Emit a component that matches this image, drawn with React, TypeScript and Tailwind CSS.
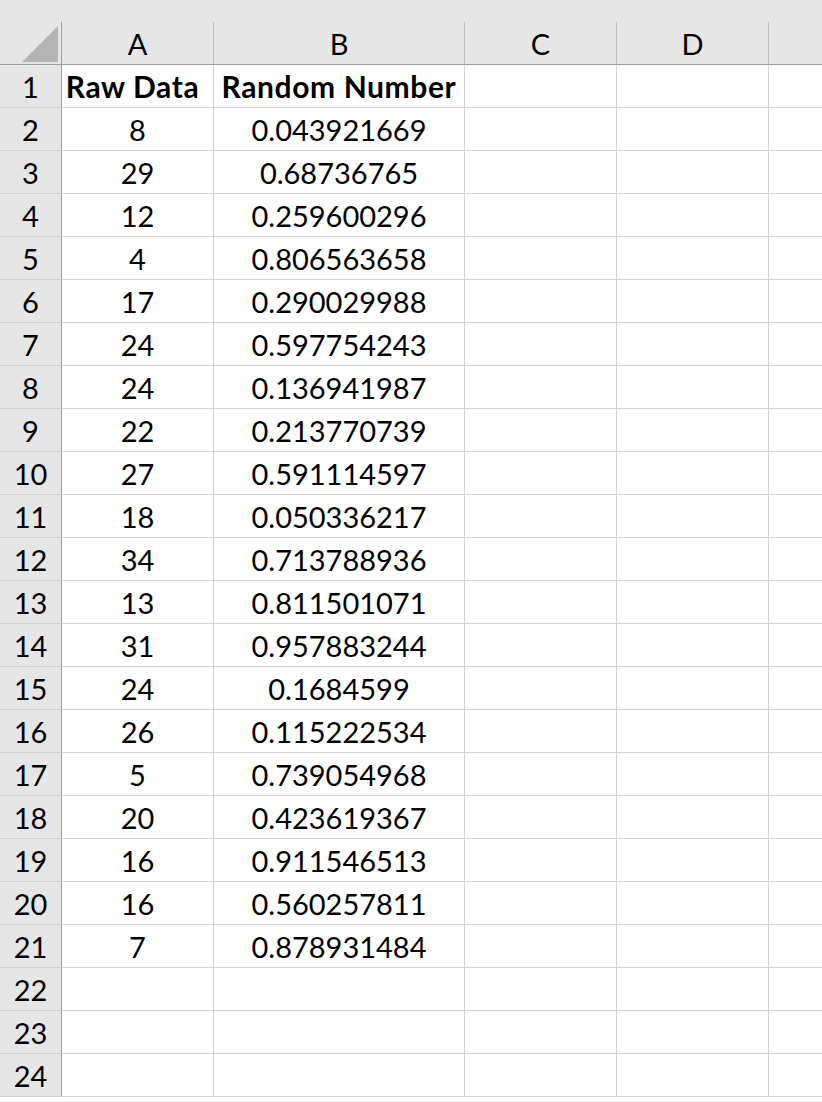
import React from 'react';

const rows: [string, string][] = [
    ['Raw Data', 'Random Number'],
    ['8', '0.043921669'],
    ['29', '0.68736765'],
    ['12', '0.259600296'],
    ['4', '0.806563658'],
    ['17', '0.290029988'],
    ['24', '0.597754243'],
    ['24', '0.136941987'],
    ['22', '0.213770739'],
    ['27', '0.591114597'],
    ['18', '0.050336217'],
    ['34', '0.713788936'],
    ['13', '0.811501071'],
    ['31', '0.957883244'],
    ['24', '0.1684599'],
    ['26', '0.115222534'],
    ['5', '0.739054968'],
    ['20', '0.423619367'],
    ['16', '0.911546513'],
    ['16', '0.560257811'],
    ['7', '0.878931484'],
    ['', ''],
    ['', ''],
    ['', ''],
];

const colWidths = ['w-[152px]', 'w-[251px]', 'w-[152px]', 'w-[152px]'];
const letters = ['A', 'B', 'C', 'D'];

const App: React.FC = () => {
    return (
        <div className="w-[822px] h-[1102px] overflow-hidden bg-white text-black font-['Lato',sans-serif] text-[29px] leading-none">
            {/* column headers */}
            <div className="flex h-[65px] bg-[#e6e6e6] border-b border-[#9e9e9e]">
                <div className="w-[62px] shrink-0 flex flex-col">
                    <div className="h-[22px]" />
                    <div className="flex-1 border-r border-[#9e9e9e] flex items-end justify-end pr-[3px] pb-[2px]">
                        <svg width="36" height="36" viewBox="0 0 36 36">
                            <polygon points="36,0 36,36 0,36" fill="#b4b4b4" />
                        </svg>
                    </div>
                </div>
                {letters.map((l, i) => (
                    <div key={l} className={`${colWidths[i]} shrink-0 flex flex-col`}>
                        <div className="h-[22px]" />
                        <div className="flex-1 border-r border-[#c0c0c0] flex items-center justify-center">
                            {l}
                        </div>
                    </div>
                ))}
                <div className="flex-1" />
            </div>

            {rows.map(([a, b], i) => (
                <div key={i} className="flex h-[43px]">
                    <div className="w-[62px] shrink-0 bg-[#e6e6e6] border-r border-[#9e9e9e] border-b border-b-[#d0d0d0] flex items-center justify-center">
                        {i + 1}
                    </div>
                    <div className={`${colWidths[0]} shrink-0 border-r border-b border-[#d4d4d4] flex items-center justify-center ${i === 0 ? 'font-bold text-[30px] tracking-[0.6px] pr-[10px]' : ''}`}>
                        {a}
                    </div>
                    <div className={`${colWidths[1]} shrink-0 border-r border-b border-[#d4d4d4] flex items-center justify-center ${i === 0 ? 'font-bold text-[30px] tracking-[0.6px]' : ''}`}>
                        {b}
                    </div>
                    <div className={`${colWidths[2]} shrink-0 border-r border-b border-[#d4d4d4]`} />
                    <div className={`${colWidths[3]} shrink-0 border-r border-b border-[#d4d4d4]`} />
                    <div className="flex-1 border-b border-[#d4d4d4]" />
                </div>
            ))}
        </div>
    );
};

export default App;
